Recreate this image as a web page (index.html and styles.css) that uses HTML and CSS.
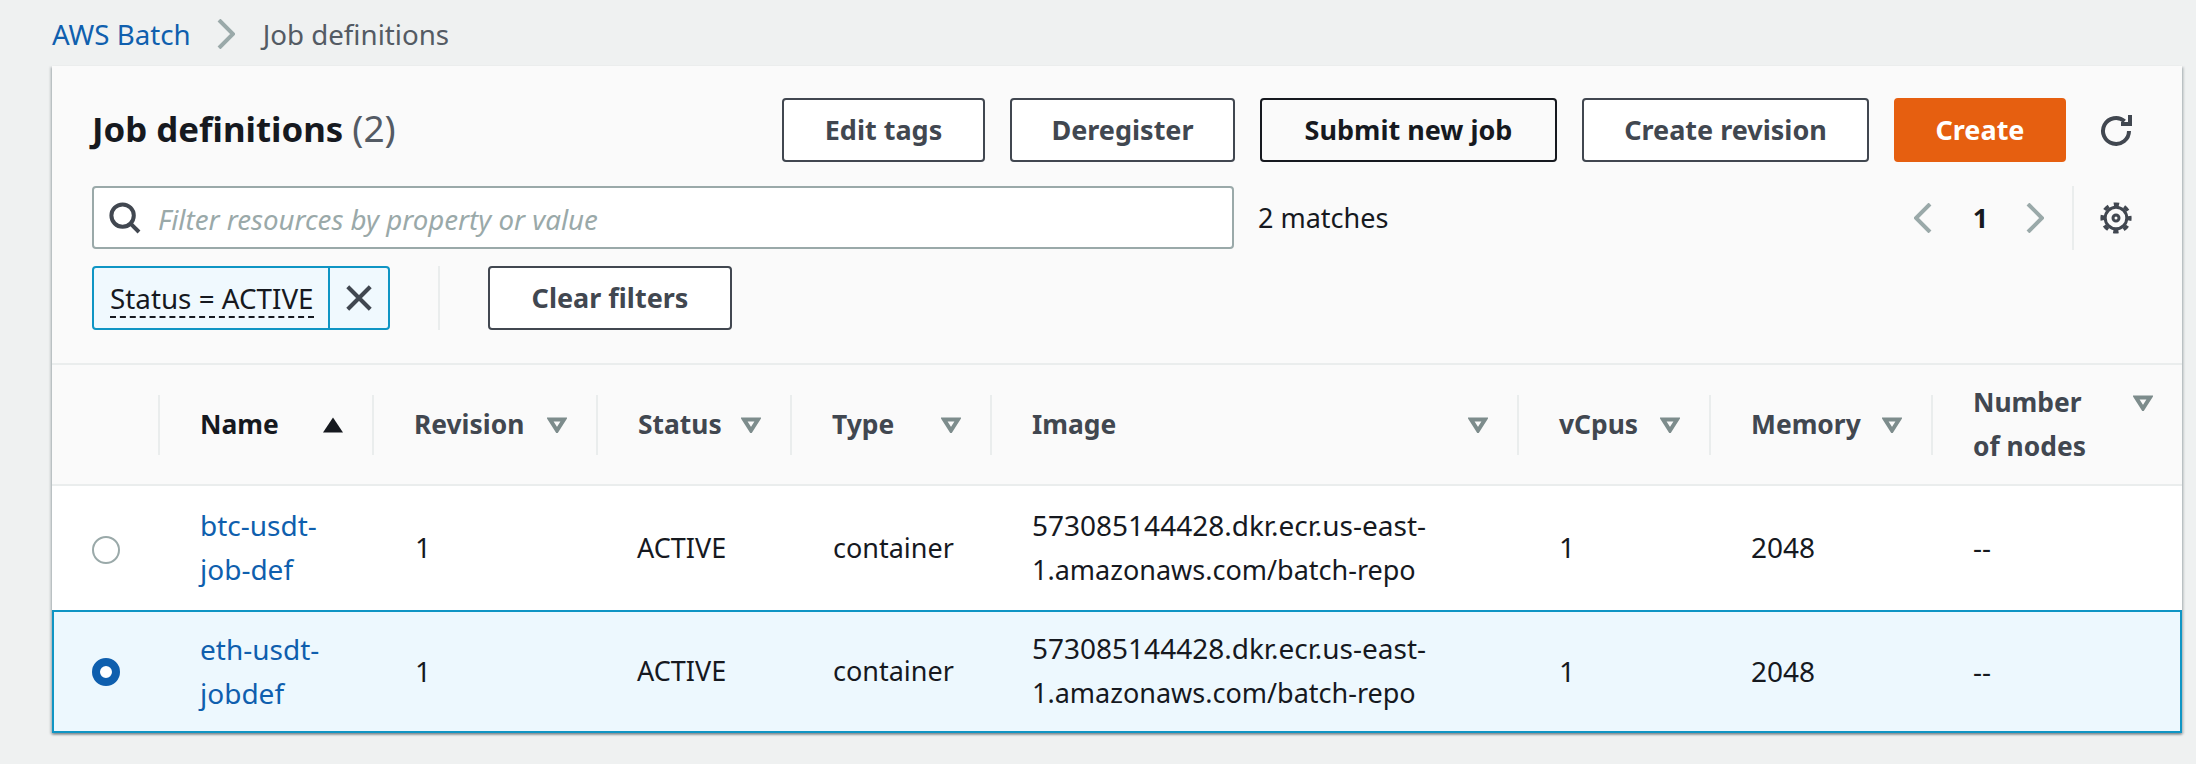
FILE: index.html
```html
<!DOCTYPE html>
<html lang="en">
<head>
<meta charset="utf-8">
<title>Job definitions</title>
<link rel="stylesheet" href="styles.css">
</head>
<body>
<nav class="crumbs">
  <a class="link" href="#">AWS Batch</a>
  <svg class="crumb-sep" viewBox="0 0 18 30"><path d="M2 1l14 14L2 29"/></svg>
  <span>Job definitions</span>
</nav>
<section class="panel">
  <header class="head">
    <div class="top">
      <h1 class="title">Job definitions <span class="count">(2)</span></h1>
      <div class="actions">
        <button class="btn b-edit">Edit tags</button>
        <button class="btn b-dereg">Deregister</button>
        <button class="btn btn-dark b-submit">Submit new job</button>
        <button class="btn b-rev">Create revision</button>
        <button class="btn btn-primary">Create</button>
        <svg class="ico refresh" viewBox="0 0 16 16"><path d="M14.5 8.5a6.5 6.5 0 1 1-2.2-4.9"/><path d="M15 0.5V5h-4.5"/></svg>
      </div>
    </div>
    <div class="filter-row">
      <div class="search">
        <svg class="ico search-ico" viewBox="0 0 16 16"><circle cx="6.8" cy="6.8" r="5.6"/><path d="M10.8 10.8L15 15"/></svg>
        <span class="placeholder">Filter resources by property or value</span>
      </div>
      <span class="matches">2 matches</span>
      <div class="pager">
        <svg class="chev" viewBox="0 0 18 30"><path d="M16 1L2 15l14 14"/></svg>
        <span class="page">1</span>
        <svg class="chev" viewBox="0 0 18 30"><path d="M2 1l14 14L2 29"/></svg>
      </div>
      <div class="prefs">
        <svg class="ico gear" viewBox="0 0 32 32"><circle cx="16" cy="16" r="10.8"/><circle class="teeth" cx="16" cy="16" r="13.8"/><circle cx="16" cy="16" r="3"/></svg>
      </div>
    </div>
    <div class="token-row">
      <div class="token">
        <span class="token-text"><span class="token-label">Status = ACTIVE</span></span>
        <span class="token-x"><svg viewBox="0 0 16 16"><path d="M2 2l12 12M14 2L2 14"/></svg></span>
      </div>
      <span class="token-sep"></span>
      <button class="btn b-clear">Clear filters</button>
    </div>
  </header>
  <table class="grid">
    <colgroup>
      <col class="c-sel"><col class="c-name"><col class="c-rev"><col class="c-status"><col class="c-type"><col class="c-image"><col class="c-cpu"><col class="c-mem"><col class="c-nodes">
    </colgroup>
    <thead>
      <tr>
        <th></th>
        <th><div class="th-in th-sorted">Name<svg class="tri" viewBox="0 0 20 16"><path class="solid" d="M10 .5L20 15.5H0z"/></svg></div></th>
        <th><div class="th-in">Revision<svg class="tri" viewBox="0 0 20 16"><path d="M3 2.5h14l-7 11z"/></svg></div></th>
        <th><div class="th-in">Status<svg class="tri" viewBox="0 0 20 16"><path d="M3 2.5h14l-7 11z"/></svg></div></th>
        <th><div class="th-in">Type<svg class="tri" viewBox="0 0 20 16"><path d="M3 2.5h14l-7 11z"/></svg></div></th>
        <th><div class="th-in">Image<svg class="tri" viewBox="0 0 20 16"><path d="M3 2.5h14l-7 11z"/></svg></div></th>
        <th><div class="th-in">vCpus<svg class="tri" viewBox="0 0 20 16"><path d="M3 2.5h14l-7 11z"/></svg></div></th>
        <th><div class="th-in">Memory<svg class="tri" viewBox="0 0 20 16"><path d="M3 2.5h14l-7 11z"/></svg></div></th>
        <th><div class="th-in"><span class="th-wrap">Number of nodes</span><svg class="tri tri-top" viewBox="0 0 20 16"><path d="M3 2.5h14l-7 11z"/></svg></div></th>
      </tr>
    </thead>
    <tbody>
      <tr class="row">
        <td class="sel"><span class="radio"></span></td>
        <td><a class="link" href="#">btc-usdt-<br>job-def</a></td>
        <td class="rev">1</td>
        <td class="word status">ACTIVE</td>
        <td class="word">container</td>
        <td>573085144428.dkr.ecr.us-east-<br><span class="repo">1.amazonaws.com/batch-repo</span></td>
        <td>1</td>
        <td>2048</td>
        <td>--</td>
      </tr>
      <tr class="row row-on">
        <td class="sel"><span class="radio radio-on"></span></td>
        <td><a class="link" href="#">eth-usdt-<br>jobdef</a></td>
        <td class="rev">1</td>
        <td class="word status">ACTIVE</td>
        <td class="word">container</td>
        <td>573085144428.dkr.ecr.us-east-<br><span class="repo">1.amazonaws.com/batch-repo</span></td>
        <td>1</td>
        <td>2048</td>
        <td>--</td>
      </tr>
    </tbody>
  </table>
</section>
</body>
</html>
```

FILE: styles.css
```css
* { box-sizing: border-box; }
html, body { margin: 0; height: 100%; }
body {
  background: #eff1f1;
  color: #16191f;
  font-family: "Noto Sans", "Open Sans", sans-serif;
  font-size: 27px;
  line-height: 44px;
  padding: 0 14px 0 52px;
  overflow: hidden;
}
.link { color: #0f5fae; text-decoration: none; }

.crumbs {
  height: 66px;
  display: flex;
  align-items: center;
  color: #545b64;
  padding-top: 2px;
  font-size: 27.7px;
}
.crumb-sep { width: 18px; height: 30px; margin: 0 28px 0 26px; fill: none; stroke: #9aa9a9; stroke-width: 4; }

.panel {
  background: #fff;
  box-shadow: 0 2px 2px 0 rgba(0,28,36,.3), 2px 1px 2px 0 rgba(0,28,36,.15), -2px 1px 2px 0 rgba(0,28,36,.15);
}
.head {
  background: #fafafa;
  padding: 32px 50px 33px 40px;
  border-bottom: 2px solid #eaeded;
}
.top { display: flex; align-items: center; justify-content: space-between; height: 64px; }
.title { margin: 0 0 4px; font-size: 34.8px; font-weight: 700; line-height: 44px; }
.count { font-weight: 400; font-size: 37px; color: #545b64; }
.actions { display: flex; align-items: center; gap: 25px; }

.btn {
  font: 700 27px/44px "Noto Sans", "Open Sans", sans-serif;
  height: 64px;
  padding: 0;
  background: #fff;
  color: #414750;
  border: 2px solid #414750;
  border-radius: 4px;
  white-space: nowrap;
}
.b-edit { width: 203px; }
.b-dereg { width: 225px; }
.b-submit { width: 297px; }
.b-rev { width: 287px; }
.btn-dark { color: #16191f; border-color: #16191f; background: #fafafa; }
.btn-primary { background: #e65f10; border-color: #e65f10; color: #fff; width: 172px; }
.ico { fill: none; stroke: #414750; stroke-width: 2; display: block; width: 32px; height: 32px; flex: none; }
.refresh { margin-left: 9px; }
.gear { stroke-width: 3; }
.gear .teeth { stroke-width: 3.6; stroke-dasharray: 5.4 5.44; stroke-dashoffset: 2.7; }

.filter-row { display: flex; align-items: center; height: 63px; margin-top: 24px; }
.search {
  width: 1142px;
  height: 63px;
  background: #fff;
  border: 2px solid #9aa9a9;
  border-radius: 4px;
  display: flex;
  align-items: center;
  padding-left: 15px;
  gap: 17px;
}
.placeholder { color: #9aa9a9; font-style: italic; font-size: 27.7px; padding-top: 2px; }
.matches { margin-left: 24px; }
.pager { margin-left: auto; display: flex; align-items: center; }
.chev { width: 18px; height: 30px; fill: none; stroke: #9aa9a9; stroke-width: 4; }
.page { font-weight: 700; width: 94px; text-align: center; padding-left: 3px; }
.prefs { height: 64px; margin-left: 28px; padding-left: 26px; border-left: 2px solid #eaeded; display: flex; align-items: center; }

.token-row { display: flex; align-items: stretch; height: 64px; margin-top: 17px; }
.token {
  display: flex;
  width: 298px;
  background: #f0f9fe;
  border: 2px solid #0f95c4;
  border-radius: 4px;
}
.token-text { flex: 1; padding-left: 16px; display: flex; align-items: center; }
.token-label { border-bottom: 2px dashed #16191f; line-height: 36px; margin-top: 2px; font-size: 27.8px; }
.token-x { width: 60px; border-left: 2px solid #0f95c4; display: flex; align-items: center; justify-content: center; }
.token-x svg { width: 34px; height: 30px; fill: none; stroke: #414750; stroke-width: 2.2; }
.token-sep { width: 2px; margin-left: 48px; background: #eaeded; }
.b-clear { margin-left: 48px; width: 244px; }

.grid { width: 100%; table-layout: fixed; border-collapse: separate; border-spacing: 0; }
.c-sel { width: 106px; }
.c-name { width: 214px; }
.c-rev { width: 224px; }
.c-status { width: 194px; }
.c-type { width: 200px; }
.c-image { width: 527px; }
.c-cpu { width: 192px; }
.c-mem { width: 222px; }
.c-nodes { width: 251px; }

th {
  background: #fafafa;
  height: 121px;
  padding: 0;
  text-align: left;
  font-size: 26.4px;
  font-weight: 700;
  color: #414750;
  border-bottom: 2px solid #eaeded;
}
.th-in {
  height: 60px;
  border-left: 2px solid #eaeded;
  padding: 0 29px 2px 40px;
  display: flex;
  align-items: center;
  justify-content: space-between;
}
.th-sorted { color: #16191f; }
.th-wrap { width: 130px; }
.tri { width: 20px; height: 16px; flex: none; margin-top: 2px; fill: none; stroke: #7d8c8c; stroke-width: 4; }
.tri .solid { fill: #16191f; stroke: none; }
.tri-top { align-self: flex-start; margin-top: 0; }

td { padding: 0 0 2px 42px; height: 124px; vertical-align: middle; font-size: 28px; }
td.word { font-size: 27px; padding-top: 1px; padding-left: 43px; }
td.status { padding-left: 41px; }
td.rev { padding-left: 43px; }
.repo { font-size: 27px; }
.row-on td { background: #edf8fe; height: 123px; border-top: 2px solid #0f95c4; border-bottom: 2px solid #0f95c4; }
.row-on td:first-child { border-left: 2px solid #0f95c4; }
.row-on td:last-child { border-right: 2px solid #0f95c4; }
td.sel { padding: 4px 0 0 40px; }
.row-on td.sel { padding: 0 0 0 38px; }

.radio { display: block; width: 28px; height: 28px; border-radius: 50%; background: #fff; border: 2px solid #9aa9a9; }
.radio-on { border: 8px solid #0f5fae; }
```
